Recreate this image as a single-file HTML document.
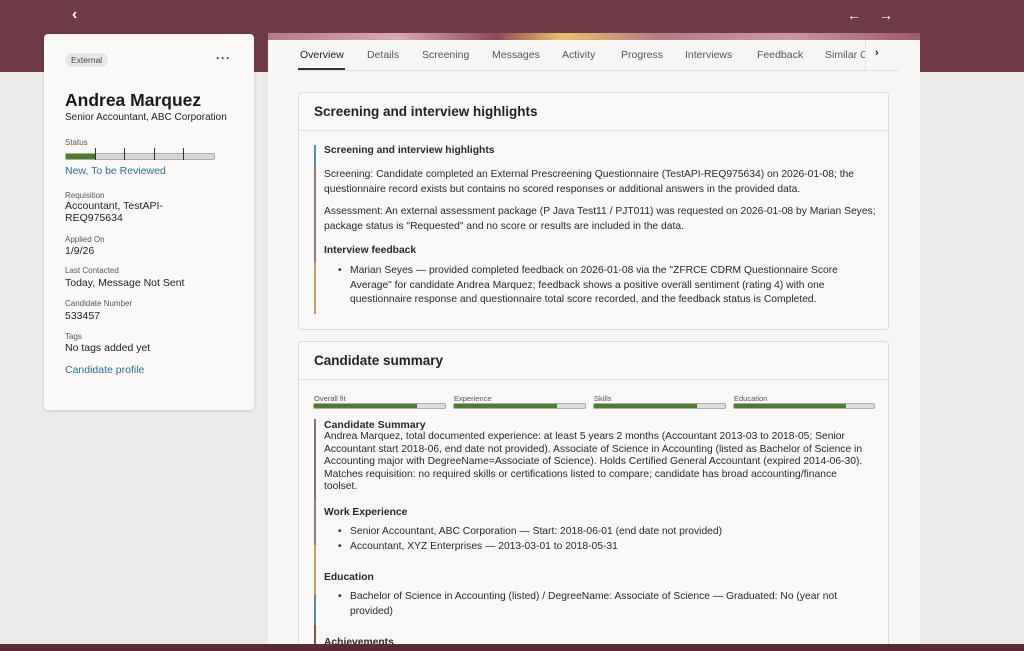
<!DOCTYPE html>
<html><head><meta charset="utf-8"><style>
*{margin:0;padding:0;box-sizing:border-box}
html,body{width:1024px;height:651px;overflow:hidden}
body{background:#eceae8;font-family:"Liberation Sans",sans-serif;color:#1f1d1c;position:relative}
.top{position:absolute;left:0;top:0;width:1024px;height:72px;background:#6e3a45}
.bot{position:absolute;left:0;top:644px;width:1024px;height:7px;background:#5c2a33}
.deco{position:absolute;left:268px;top:33px;width:652px;height:12px;background:linear-gradient(90deg,#b27e88,#d7aab2 20%,#8a4b58 35%,#e8c06a 45%,#b27e88 60%,#c99aa3 80%,#9a5a66)}
.card{position:absolute;left:44px;top:34px;width:210px;height:376px;background:#faf9f8;border-radius:4px;box-shadow:0 1px 3px rgba(0,0,0,.15)}
.main{position:absolute;left:268px;top:40px;width:652px;height:604px;background:#f7f6f5}
.lbl{font-size:8px;color:#555;}
.val{font-size:10.5px;color:#222;line-height:12px}
.abs{position:absolute}
.tab{position:absolute;top:49px;font-size:10.5px;color:#555}
.box{position:absolute;left:298px;width:591px;background:#f9f8f7;border:1px solid #dcdad8;border-radius:4px}
.bh{height:38px;border-bottom:1px solid #e4e2e0;padding:11px 15px;font-size:13.5px;font-weight:bold;color:#222}
.t{font-size:10.3px;line-height:14.5px;color:#2a2827;white-space:nowrap;position:absolute;left:324px}
.b{font-weight:bold}
.bar{position:absolute;height:6px;width:132px;background:#ddd;border:1px solid #aaa;border-radius:2px;overflow:hidden}
.bar i{display:block;height:100%;background:#4d7d2a}
.sl{position:absolute;font-size:7.5px;color:#555}
</style></head><body>
<div class="top"></div>
<div class="deco"></div>
<div class="abs" style="left:72px;top:6px;color:#fff;font-size:16px;font-weight:bold">‹</div>
<div class="abs" style="left:847px;top:7px;color:#fff;font-size:14px">←</div>
<div class="abs" style="left:879px;top:7px;color:#fff;font-size:14px">→</div>

<div class="card">
 <div class="abs" style="left:21px;top:19px;background:#e9e7e5;border-radius:8px;padding:2px 6px;font-size:8.5px;color:#444">External</div>
 <div class="abs" style="left:172px;top:17px;font-size:12px;color:#333;font-weight:bold;letter-spacing:1px">···</div>
 <div class="abs" style="left:21px;top:56px;font-size:17.5px;font-weight:bold;color:#1a1a1a">Andrea Marquez</div>
 <div class="abs val" style="left:21px;top:78px;font-size:10px">Senior Accountant, ABC Corporation</div>
 <div class="abs lbl" style="left:21px;top:104px">Status</div>
 <div class="abs" style="left:21px;top:119px;width:150px;height:7px;background:#d9d7d5;border:1px solid #aaa;border-radius:2px"><div style="width:30px;height:100%;background:#4d7d2a"></div></div>
 <div class="abs" style="left:51px;top:114px;width:1px;height:12px;background:#333"></div>
 <div class="abs" style="left:80px;top:114px;width:1px;height:12px;background:#333"></div>
 <div class="abs" style="left:110px;top:114px;width:1px;height:12px;background:#333"></div>
 <div class="abs" style="left:139px;top:114px;width:1px;height:12px;background:#333"></div>
 <div class="abs" style="left:21px;top:131px;font-size:10.5px;color:#2b6e94">New, To be Reviewed</div>
 <div class="abs lbl" style="left:21px;top:157px">Requisition</div>
 <div class="abs val" style="left:21px;top:166px">Accountant, TestAPI-<br>REQ975634</div>
 <div class="abs lbl" style="left:21px;top:201px">Applied On</div>
 <div class="abs val" style="left:21px;top:211px">1/9/26</div>
 <div class="abs lbl" style="left:21px;top:232px">Last Contacted</div>
 <div class="abs val" style="left:21px;top:243px">Today, Message Not Sent</div>
 <div class="abs lbl" style="left:21px;top:265px">Candidate Number</div>
 <div class="abs val" style="left:21px;top:276px">533457</div>
 <div class="abs lbl" style="left:21px;top:298px">Tags</div>
 <div class="abs val" style="left:21px;top:308px">No tags added yet</div>
 <div class="abs" style="left:21px;top:330px;font-size:10.5px;color:#2b6e94">Candidate profile</div>
</div>

<div class="main"></div>
<div class="tab" style="left:300px;color:#1a1a1a">Overview</div>
<div class="abs" style="left:298px;top:68px;width:47px;height:2px;background:#333"></div>
<div class="abs" style="left:298px;top:70px;width:600px;height:1px;background:#e0dedc"></div>
<div class="tab" style="left:367px">Details</div>
<div class="tab" style="left:422px">Screening</div>
<div class="tab" style="left:492px">Messages</div>
<div class="tab" style="left:562px">Activity</div>
<div class="tab" style="left:621px">Progress</div>
<div class="tab" style="left:685px">Interviews</div>
<div class="tab" style="left:757px">Feedback</div>
<div class="tab" style="left:825px;width:40px;overflow:hidden;white-space:nowrap">Similar Ca</div>
<div class="abs" style="left:865px;top:40px;width:30px;height:30px;background:#f7f6f5;border-left:1px solid #e4e2e0;font-size:11px;font-weight:bold;padding:7px 9px">›</div>

<div class="box" style="top:92px;height:238px"><div class="bh">Screening and interview highlights</div></div>
<div class="abs" style="left:314px;top:145px;width:2px;height:24px;background:#5b8aa6"></div>
<div class="abs" style="left:314px;top:169px;width:2px;height:93px;background:#9a7a80"></div>
<div class="abs" style="left:314px;top:262px;width:2px;height:52px;background:#c99a6a"></div>
<div class="t b" style="top:144px">Screening and interview highlights</div>
<div class="t" style="top:168px">Screening: Candidate completed an External Prescreening Questionnaire (TestAPI-REQ975634) on 2026-01-08; the<br>questionnaire record exists but contains no scored responses or additional answers in the provided data.</div>
<div class="t" style="top:205px">Assessment: An external assessment package (P Java Test11 / PJT011) was requested on 2026-01-08 by Marian Seyes;<br>package status is "Requested" and no score or results are included in the data.</div>
<div class="t b" style="top:244px">Interview feedback</div>
<div class="t" style="top:264px;left:338px">•</div>
<div class="t" style="top:264px;left:350px">Marian Seyes — provided completed feedback on 2026-01-08 via the "ZFRCE CDRM Questionnaire Score<br>Average" for candidate Andrea Marquez; feedback shows a positive overall sentiment (rating 4) with one<br>questionnaire response and questionnaire total score recorded, and the feedback status is Completed.</div>

<div class="box" style="top:341px;height:310px"><div class="bh">Candidate summary</div></div>
<div class="sl" style="left:314px;top:394px">Overall fit</div><div class="bar" style="left:313px;top:403px;width:133px"><i style="width:79%"></i></div>
<div class="sl" style="left:454px;top:394px">Experience</div><div class="bar" style="left:453px;top:403px;width:133px"><i style="width:79%"></i></div>
<div class="sl" style="left:594px;top:394px">Skills</div><div class="bar" style="left:593px;top:403px;width:133px"><i style="width:79%"></i></div>
<div class="sl" style="left:734px;top:394px">Education</div><div class="bar" style="left:733px;top:403px;width:142px"><i style="width:80%"></i></div>
<div class="abs" style="left:314px;top:419px;width:2px;height:80px;background:#7f6f88"></div>
<div class="abs" style="left:314px;top:499px;width:2px;height:46px;background:#8a7f88"></div>
<div class="abs" style="left:314px;top:545px;width:2px;height:50px;background:#c99a6a"></div>
<div class="abs" style="left:314px;top:595px;width:2px;height:30px;background:#5b8aa6"></div>
<div class="abs" style="left:314px;top:625px;width:2px;height:20px;background:#8a5040"></div>
<div class="t b" style="top:418px;font-size:10.5px">Candidate Summary</div>
<div class="t" style="top:431px;line-height:12.6px">Andrea Marquez, total documented experience: at least 5 years 2 months (Accountant 2013-03 to 2018-05; Senior<br>Accountant start 2018-06, end date not provided). Associate of Science in Accounting (listed as Bachelor of Science in<br>Accounting major with DegreeName=Associate of Science). Holds Certified General Accountant (expired 2014-06-30).<br>Matches requisition: no required skills or certifications listed to compare; candidate has broad accounting/finance<br>toolset.</div>
<div class="t b" style="top:506px">Work Experience</div>
<div class="t" style="top:525px;left:338px">•<br>•</div>
<div class="t" style="top:525px;left:350px">Senior Accountant, ABC Corporation — Start: 2018-06-01 (end date not provided)<br>Accountant, XYZ Enterprises — 2013-03-01 to 2018-05-31</div>
<div class="t b" style="top:571px">Education</div>
<div class="t" style="top:590px;left:338px">•</div>
<div class="t" style="top:590px;left:350px">Bachelor of Science in Accounting (listed) / DegreeName: Associate of Science — Graduated: No (year not<br>provided)</div>
<div class="t b" style="top:636px">Achievements</div>
<div class="bot"></div>
</body></html>
